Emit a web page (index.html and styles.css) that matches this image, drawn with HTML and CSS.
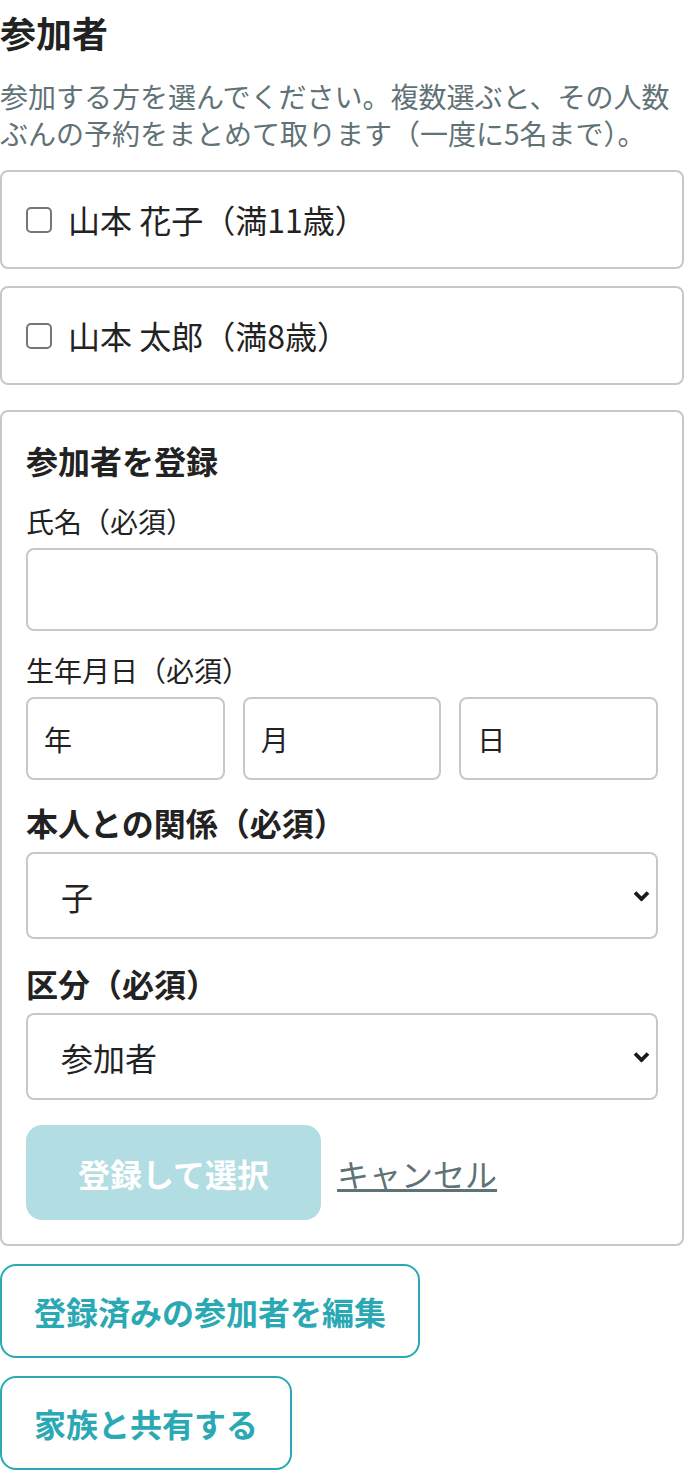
FILE: index.html
```html
<!DOCTYPE html>
<html lang="ja">
<head>
<meta charset="utf-8">
<title>参加者</title>
<link rel="stylesheet" href="styles.css">
</head>
<body>
<main class="page">
  <h2 class="title">参加者</h2>
  <p class="desc">参加する方を選んでください。複数選ぶと、その人数ぶんの予約をまとめて取ります（一度に5名まで）。</p>

  <div class="options">
    <label class="option"><input type="checkbox" class="check"><span>山本 花子（満11歳）</span></label>
    <label class="option"><input type="checkbox" class="check"><span>山本 太郎（満8歳）</span></label>
  </div>

  <section class="register">
    <h3 class="register-title">参加者を登録</h3>

    <div class="field">
      <label class="label" for="name">氏名（必須）</label>
      <input class="input" id="name" type="text">
    </div>

    <div class="field">
      <label class="label">生年月日（必須）</label>
      <div class="date">
        <input class="input" type="text" placeholder="年">
        <input class="input" type="text" placeholder="月">
        <input class="input" type="text" placeholder="日">
      </div>
    </div>

    <div class="field wide">
      <label class="label strong" for="rel">本人との関係（必須）</label>
      <div class="select-wrap">
        <select class="select" id="rel"><option>子</option><option>配偶者</option><option>親</option></select>
        <svg class="chevron" viewBox="0 0 17 11" aria-hidden="true"><path d="M2 2 L8.5 8.5 L15 2" fill="none" stroke="#1a1a1a" stroke-width="3.8"/></svg>
      </div>
    </div>

    <div class="field last">
      <label class="label strong" for="cat">区分（必須）</label>
      <div class="select-wrap">
        <select class="select" id="cat"><option>参加者</option><option>付き添い</option></select>
        <svg class="chevron" viewBox="0 0 17 11" aria-hidden="true"><path d="M2 2 L8.5 8.5 L15 2" fill="none" stroke="#1a1a1a" stroke-width="3.8"/></svg>
      </div>
    </div>

    <div class="form-actions">
      <button class="btn-primary" type="button" disabled>登録して選択</button>
      <a class="link" href="#">キャンセル</a>
    </div>
  </section>

  <div class="actions">
    <button class="btn-outline" type="button">登録済みの参加者を編集</button>
    <button class="btn-outline" type="button">家族と共有する</button>
  </div>
</main>
</body>
</html>
```

FILE: styles.css
```css
* {
  box-sizing: border-box;
}

body {
  margin: 0;
  background: #ffffff;
  color: #222222;
  font-family: "Noto Sans CJK JP", "Noto Sans", sans-serif;
}

.page {
  width: 684px;
}

.title {
  margin: 0;
  font-size: 36px;
  line-height: 64px;
  font-weight: 700;
}

.desc {
  margin: 14px 0 18px;
  font-size: 28px;
  line-height: 37px;
  color: #5f7276;
}

.options {
  display: flex;
  flex-direction: column;
  gap: 17px;
}

.option {
  display: flex;
  align-items: center;
  gap: 18px;
  padding: 24px;
  border: 2px solid #c8c8c8;
  border-radius: 8px;
  font-size: 32px;
  line-height: 47px;
}

.option span {
  margin-left: -2px;
}

.check {
  appearance: none;
  -webkit-appearance: none;
  margin: 0;
  width: 26px;
  height: 26px;
  flex: none;
  border: 2px solid #767676;
  border-radius: 5px;
  background: #fff;
}

.register {
  margin-top: 25px;
  padding: 24px;
  border: 2px solid #c8c8c8;
  border-radius: 8px;
}

.register-title {
  margin: 0 0 16px;
  font-size: 32px;
  line-height: 48px;
  font-weight: 700;
}

.field {
  margin-bottom: 18px;
}

.field.wide {
  margin-bottom: 20px;
}

.field.last {
  margin-bottom: 0;
}

.label {
  display: block;
  margin-bottom: 6px;
  font-size: 28px;
  line-height: 42px;
}

.label.strong {
  font-size: 32px;
  line-height: 48px;
  font-weight: 700;
}

.input {
  display: block;
  width: 100%;
  height: 83px;
  margin: 0;
  padding: 0 16px;
  border: 2px solid #c8c8c8;
  border-radius: 8px;
  background: #fff;
  color: #222;
  font-family: inherit;
  font-size: 28px;
  outline: none;
}

.input::placeholder {
  color: #222;
  opacity: 1;
}

.date {
  display: grid;
  grid-template-columns: repeat(3, 1fr);
  gap: 18px;
}

.select-wrap {
  position: relative;
}

.select {
  appearance: none;
  -webkit-appearance: none;
  display: block;
  width: 100%;
  height: 87px;
  margin: 0;
  padding: 0 60px 0 33px;
  border: 2px solid #c8c8c8;
  border-radius: 8px;
  background: #fff;
  color: #222;
  font-family: inherit;
  font-size: 32px;
  outline: none;
}

.chevron {
  position: absolute;
  right: 8px;
  top: 50%;
  width: 17px;
  height: 11px;
  transform: translateY(-50%);
  pointer-events: none;
}

.form-actions {
  display: flex;
  align-items: center;
  gap: 16px;
  margin-top: 25px;
}

.btn-primary {
  margin: 0;
  padding: 23px 50px 22px;
  border: 2px solid #b2dde2;
  border-radius: 16px;
  background: #b2dde2;
  color: #ffffff;
  font-family: inherit;
  font-size: 32px;
  line-height: 46px;
  font-weight: 700;
}

.link {
  color: #5f7276;
  font-size: 32px;
  line-height: 46px;
  text-decoration: underline;
}

.actions {
  display: flex;
  flex-direction: column;
  align-items: flex-start;
  gap: 18px;
  margin-top: 18px;
}

.btn-outline {
  margin: 0;
  padding: 22px 32px;
  border: 2px solid #2aa9b4;
  border-radius: 16px;
  background: #ffffff;
  color: #2aa9b4;
  font-family: inherit;
  font-size: 32px;
  line-height: 46px;
  font-weight: 700;
}
```
